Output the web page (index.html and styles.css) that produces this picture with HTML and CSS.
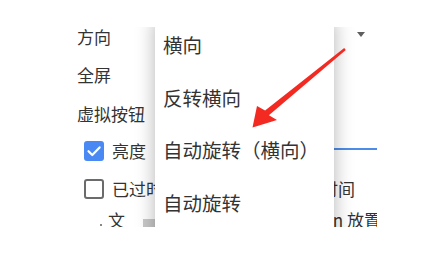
FILE: index.html
```html
<!DOCTYPE html>
<html lang="zh">
<head>
<meta charset="utf-8">
<link rel="stylesheet" href="styles.css">
</head>
<body>
<div class="frame">
  <div class="settings">
    <div class="row r1"><span class="label">方向</span><span class="caret"></span></div>
    <div class="row r2"><span class="label">全屏</span></div>
    <div class="row r3"><span class="label">虚拟按钮</span></div>
    <div class="row r4">
      <span class="box checked"><svg viewBox="0 0 20 20" width="20" height="20"><path d="M4.5 10.2 L8.3 14 L15.6 6.4" fill="none" stroke="#fff" stroke-width="2.2" stroke-linecap="round" stroke-linejoin="round"/></svg></span>
      <span class="label">亮度</span>
      <span class="slider"></span>
    </div>
    <div class="row r5">
      <span class="box"></span>
      <span class="label">已过时</span>
      <span class="note n5">超时时间</span>
    </div>
    <div class="row r6">
      <span class="dot"></span>
      <span class="label">文</span>
      <span class="thumb"></span>
      <span class="note n6">图 n 放置</span>
    </div>
  </div>
  <div class="menu">
    <div class="item">横向</div>
    <div class="item">反转横向</div>
    <div class="item">自动旋转<span class="paren">（</span>横向<span class="paren">）</span></div>
    <div class="item">自动旋转</div>
  </div>
</div>
<svg class="annot" width="430" height="263" viewBox="0 0 430 263">
  <polygon points="344.2,48.1 265.1,110.6 257,106 252.5,127.5 277,120 268.9,115.3 345.8,50" fill="#f22a22"/>
</svg>
</body>
</html>
```
FILE: styles.css
```css
html, body {
  margin: 0;
  padding: 0;
  background: #fff;
  font-family: "Noto Sans CJK SC", "Noto Sans", sans-serif;
  color: #333;
}
body {
  width: 430px;
  height: 263px;
  overflow: hidden;
  position: relative;
}
.frame {
  position: relative;
  margin-top: 27px;
  width: 377px;
  height: 200px;
  overflow: hidden;
}
.settings {
  width: 400px;
  margin-top: -10px;
  display: flex;
  flex-direction: column;
}
.row {
  display: flex;
  align-items: center;
  padding-left: 77px;
  font-size: 17px;
}
.r1 { height: 38px; }
.r2 { height: 39px; }
.r3 { height: 38px; }
.r4 { height: 37px; padding-left: 84px; }
.r5 { height: 39px; padding-left: 84px; }
.r6 { height: 22px; }
.label {
  white-space: nowrap;
  line-height: 1;
}
.caret {
  margin-left: auto;
  margin-right: 35px;
  align-self: flex-start;
  margin-top: 15px;
  width: 0;
  height: 0;
  border-left: 4.5px solid transparent;
  border-right: 4.5px solid transparent;
  border-top: 5px solid #5f5f5f;
}
.box {
  width: 20px;
  height: 20px;
  box-sizing: border-box;
  border: 2px solid #6b6b6b;
  border-radius: 3px;
  margin-right: 8px;
  flex: none;
}
.box.checked {
  border: none;
  background: #4a89f3;
}
.box svg { display: block; }
.slider {
  flex: 1;
  height: 2px;
  margin-left: 20px;
  margin-bottom: 3px;
  background: #4c8be8;
}
.note {
  margin-left: auto;
  white-space: nowrap;
  line-height: 1;
}
.n5 { margin-right: 45px; }
.n6 { margin-right: 19px; }
.dot {
  width: 2px;
  height: 2px;
  background: #888;
  margin-left: 23px;
  margin-right: 6px;
  align-self: flex-end;
  margin-bottom: 4px;
}
.thumb {
  align-self: flex-start;
  margin-top: 11px;
  margin-left: 18px;
  width: 30px;
  height: 20px;
  background: #c9c9c9;
}
.menu {
  position: absolute;
  left: 155px;
  top: -8.5px;
  width: 179px;
  height: 240px;
  background: #fff;
  box-shadow: 0 0 18px rgba(0, 0, 0, 0.3);
}
.item {
  height: 52.5px;
  display: flex;
  align-items: center;
  padding-left: 8px;
  font-size: 19.5px;
  color: #333;
  white-space: nowrap;
}
.paren {
  font-family: "Noto Sans CJK TC", "Noto Sans CJK SC", sans-serif;
}
.annot {
  position: absolute;
  left: 0;
  top: 0;
  pointer-events: none;
}
```
